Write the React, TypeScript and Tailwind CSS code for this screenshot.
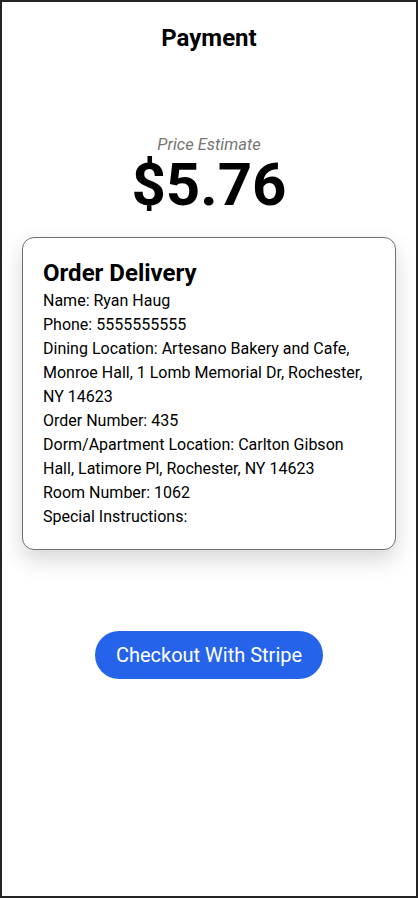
import React from "react";

export default function App() {
  const lines = [
    "Name: Ryan Haug",
    "Phone: 5555555555",
    "Dining Location: Artesano Bakery and Cafe, Monroe Hall, 1 Lomb Memorial Dr, Rochester, NY 14623",
    "Order Number: 435",
    "Dorm/Apartment Location: Carlton Gibson Hall, Latimore Pl, Rochester, NY 14623",
    "Room Number: 1062",
    "Special Instructions:",
  ];
  return (
    <div
      className="w-[418px] h-[898px] border-2 border-[#242424] bg-white flex flex-col items-center text-black"
      style={{ fontFamily: "Roboto, 'Liberation Sans', sans-serif" }}
    >
      <h1 className="mt-[21px] text-[24px] leading-[30px] font-bold">Payment</h1>
      <div className="mt-[83px] text-[16.5px] leading-[18px] italic text-[#757575]">Price Estimate</div>
      <div className="mt-[4px] text-[60px] leading-[54px] font-bold">$5.76</div>
      <div className="mt-[25px] w-[374px] rounded-[12px] border border-[#707070] bg-white px-5 pt-[19px] pb-[20px] shadow-[0_10px_22px_rgba(0,0,0,0.16)]">
        <h2 className="text-[24px] leading-[32px] font-bold">Order Delivery</h2>
        <div className="text-[16px] leading-[24px] font-normal">
          {lines.map((l) => (
            <div key={l}>{l}</div>
          ))}
        </div>
      </div>
      <button className="mt-[81px] h-[48px] px-[21px] rounded-full bg-[#2563eb] text-white text-[20px] leading-[28px] font-normal">
        Checkout With Stripe
      </button>
    </div>
  );
}
